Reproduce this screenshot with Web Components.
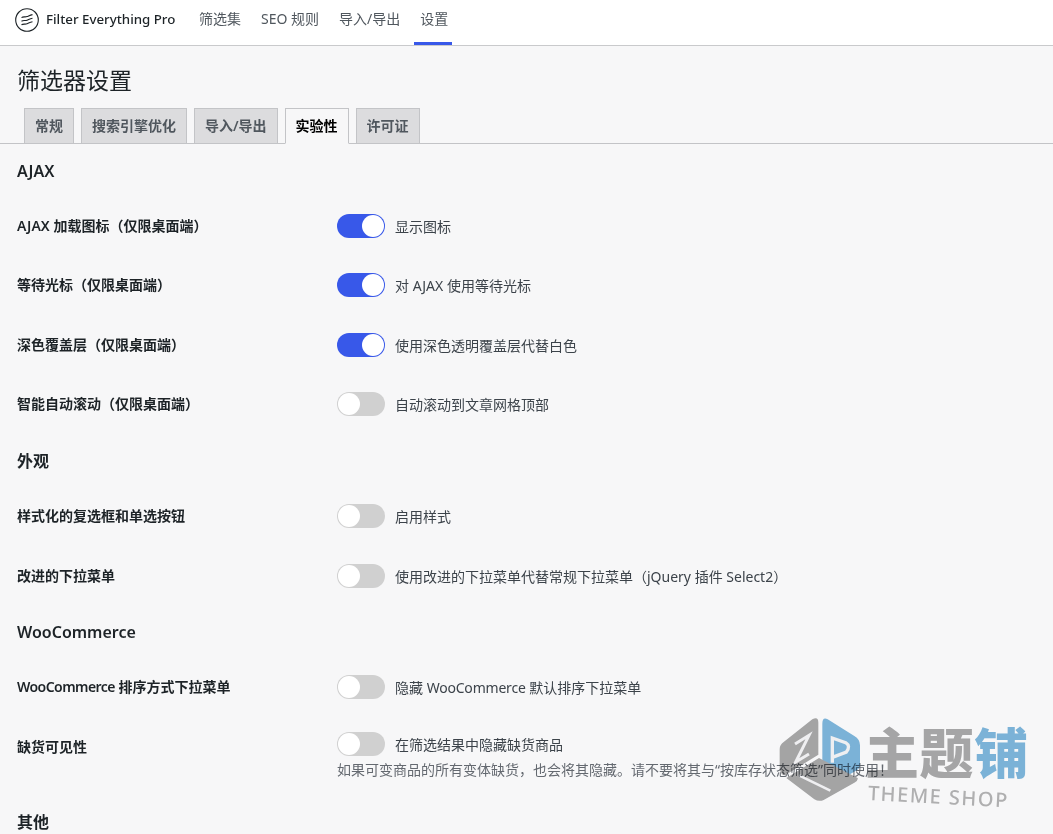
<!DOCTYPE html>
<html lang="zh"><head><meta charset="utf-8"><style>
html,body{margin:0;padding:0;height:834px;overflow:hidden;background:#f7f7f8}
body{font:14px/20px "Noto Sans","Noto Sans CJK SC",sans-serif;color:#3c434a;position:relative}
</style></head><body>
<fe-topbar></fe-topbar>
<fe-page>
<fe-section title="AJAX">
<fe-row label="AJAX 加载图标（仅限桌面端）" text="显示图标" on h="59.4"></fe-row>
<fe-row label="等待光标（仅限桌面端）" text="对 AJAX 使用等待光标" on h="59.4"></fe-row>
<fe-row label="深色覆盖层（仅限桌面端）" text="使用深色透明覆盖层代替白色" on h="59.4"></fe-row>
<fe-row label="智能自动滚动（仅限桌面端）" text="自动滚动到文章网格顶部" h="59.4"></fe-row>
</fe-section>
<fe-section title="外观" style="margin-top:1.5px">
<fe-row label="样式化的复选框和单选按钮" text="启用样式" h="59.5"></fe-row>
<fe-row label="改进的下拉菜单" text="使用改进的下拉菜单代替常规下拉菜单（jQuery 插件 Select2）" h="59.5"></fe-row>
</fe-section>
<fe-section title="WooCommerce" style="margin-top:1px">
<fe-row label="WooCommerce 排序方式下拉菜单" text="隐藏 WooCommerce 默认排序下拉菜单" h="59.5"></fe-row>
<fe-row label="缺货可见性" text="在筛选结果中隐藏缺货商品" note="如果可变商品的所有变体缺货，也会将其隐藏。请不要将其与“按库存状态筛选”同时使用！" h="79"></fe-row>
</fe-section>
<fe-section title="其他"></fe-section>
</fe-page>
<fe-watermark></fe-watermark>
<script>
function def(n,f){customElements.define(n,class extends HTMLElement{connectedCallback(){if(!this.shadowRoot){this.attachShadow({mode:'open'}).innerHTML=f(this)}}})}
const woo=(s,ls)=>s.replace('WooCommerce',`<span style="letter-spacing:${ls}px">WooCommerce</span>`);
def('fe-topbar',()=>`<style>
:host{display:flex;height:45px;background:#fff;border-bottom:1px solid #c9cacc;align-items:stretch}
.logo{display:flex;align-items:center;margin-left:15px;gap:7px;font-size:13.3px;font-weight:500;color:#1d2327;width:178px;flex:none;padding-bottom:5px;box-sizing:border-box}
.logo span{padding-bottom:2px}
a{display:flex;align-items:center;font-size:14px;color:#50575e;padding:0 5px 4px 6px;margin-right:9px;box-sizing:border-box;border-bottom:3px solid transparent}
a.on{border-color:#3858e9;padding-right:4px}
svg{flex:none}
</style><div class="logo"><svg width="24" height="24" viewBox="0 0 24 24" fill="none" stroke="#1d2327"><circle cx="12" cy="12" r="11.3" stroke-width="1.1"/><path d="M6.5 9.6C8.5 8.2 10 9.4 12 8.6S15 7 17.5 6.6M6.5 13.2C8.5 11.8 10 13 12 12.2S15 10.6 17.5 10.2M6.5 16.8C8.5 15.4 10 16.6 12 15.8S15 14.2 17.5 13.8" stroke-width="1.1"/></svg><span>Filter Everything Pro</span></div><a>筛选集</a><a>SEO 规则</a><a>导入/导出</a><a class="on">设置</a>`);
def('fe-page',()=>`<style>
:host{display:block}
h1{margin:0;padding:20px 0 0 17px;font-size:23px;line-height:28px;font-weight:400;color:#1d2327;height:42px}
.tabs{display:flex;gap:7px;padding-left:24px;height:35px;border-bottom:1px solid #c3c4c7}
.tab{height:36px;box-sizing:border-box;border:1px solid #c3c4c7;background:#dcdcde;color:#50575e;font-size:14px;font-weight:600;padding:0 10px 1px;display:flex;align-items:center}
.tab.on{background:#f7f7f8;color:#000;border-bottom-color:#f7f7f8}
.c{padding:0 17px}
</style><h1>筛选器设置</h1><div class="tabs"><div class="tab">常规</div><div class="tab">搜索引擎优化</div><div class="tab">导入/导出</div><div class="tab on">实验性</div><div class="tab">许可证</div></div><div class="c"><slot></slot></div>`);
def('fe-section',e=>`<style>
:host{display:block}
h2{margin:0;padding-top:16px;font-size:16px;line-height:22px;font-weight:600;color:#1d2327;height:35px}
</style><h2>${e.getAttribute('title')}</h2><slot></slot>`);
def('fe-row',e=>{const n=e.getAttribute('note');return `<style>
:host{display:flex;height:${e.getAttribute('h')}px;box-sizing:border-box;padding-top:19px}
.l{width:320px;flex:none;font-weight:600;font-size:14px;line-height:24px;color:#1d2327}
.r{flex:1;font-size:14px;color:#3c434a;${n?'margin-top:-3px':''}}
.top{display:flex;align-items:center;gap:10px;height:24px}
.top span.x{padding-top:2px}
fe-toggle{flex:none}
.n{line-height:20px;margin-top:4px;white-space:nowrap;color:#646970}
</style><div class="l">${woo(e.getAttribute('label'),-.55)}</div><div class="r"><div class="top"><fe-toggle ${e.hasAttribute('on')?'on':''}></fe-toggle><span class="x">${woo(e.getAttribute('text'),-.2)}</span></div>${n?`<div class="n">${n}</div>`:''}</div>`});
def('fe-toggle',e=>{const on=e.hasAttribute('on');return `<style>
:host{display:block;width:48px;height:24px;border-radius:12px;background:${on?'#3858e9':'#d0d0d0'};position:relative}
i{position:absolute;top:1px;${on?'right:1px':'left:1px'};width:22px;height:22px;border-radius:50%;background:#fff}
</style><i></i>`});
def('fe-watermark',()=>`<style>
:host{position:absolute;left:775px;top:712px;width:270px;height:100px;display:block;pointer-events:none;mix-blend-mode:multiply}
svg{position:absolute;left:0;top:0}
.t{position:absolute;left:90px;top:7px;font:800 54px/64px "Noto Sans CJK SC",sans-serif;color:#ababab;white-space:nowrap;letter-spacing:.6px}
.t b{color:#7fb8dd;font-weight:800}
.e{position:absolute;left:93px;top:69px;font:500 20px/24px "Noto Sans",sans-serif;color:#b5b5b5;letter-spacing:1.5px;white-space:nowrap;transform:rotate(3deg);transform-origin:0 50%}
</style><svg width="95" height="95" viewBox="0 0 285 285"><path d="M112 22Q130 12 130 32V128L30 190Q18 190 14 170V112Q14 98 26 90Z" fill="#a9a9a9"/><path d="M158 22 238 72Q255 82 255 100V158Q255 170 240 178L182 212Q150 222 142 160V36Q142 14 158 22Z" fill="#7fb8dd"/><path d="M34 198 132 138 248 198Q250 206 238 212L146 264Q132 270 118 262Z" fill="#a9a9a9"/><path d="M60 96 102 70 62 150 102 126" fill="none" stroke="#f7f7f8" stroke-width="9"/><path d="M172 152V78L212 92Q228 102 214 120L172 136" fill="none" stroke="#f7f7f8" stroke-width="10"/><path d="M72 190 166 236" stroke="#f7f7f8" stroke-width="8"/></svg><div class="t">主题<b>铺</b></div><div class="e">THEME SHOP</div>`);
</script>
</body></html>
